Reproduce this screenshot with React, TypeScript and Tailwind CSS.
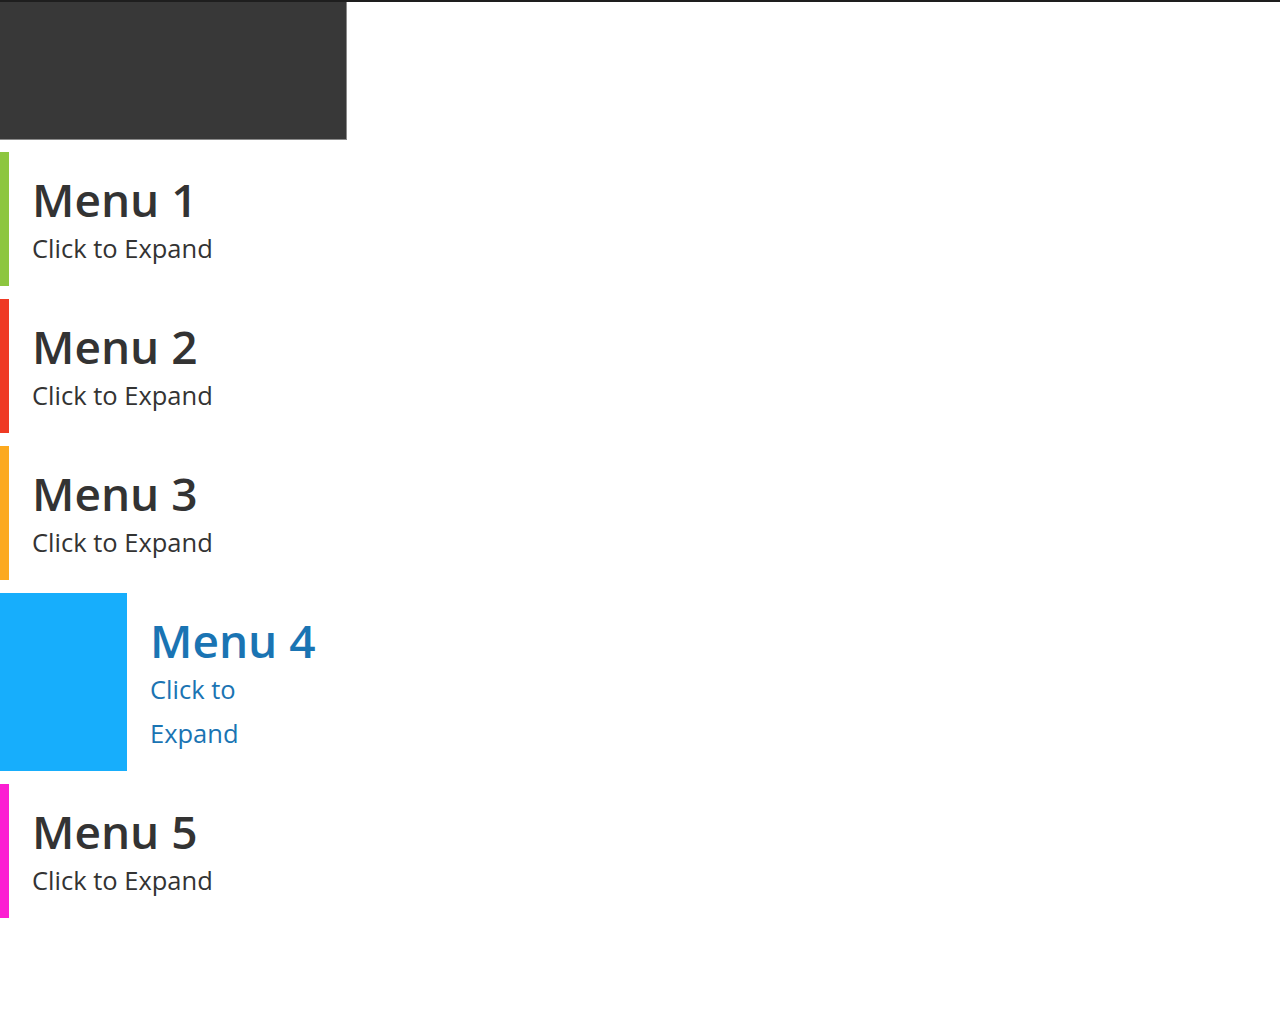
const items = [
  { label: "Menu 1", bar: "bg-[#8dc63f]", active: false },
  { label: "Menu 2", bar: "bg-[#ef3a24]", active: false },
  { label: "Menu 3", bar: "bg-[#fca91f]", active: false },
  { label: "Menu 4", bar: "bg-[#17aefc]", active: true },
  { label: "Menu 5", bar: "bg-[#fc1ed2]", active: false },
];

function MenuItem({ label, bar, active }: { label: string; bar: string; active: boolean }) {
  return (
    <li className="flex w-[347px] cursor-pointer">
      <div className={`${bar} shrink-0 ${active ? "w-[127px]" : "w-[9px]"}`} />
      <div
        className={`min-w-0 flex-1 pt-[20px] pb-[16px] pr-[30px] pl-[23px] ${
          active ? "text-[#1a74b3]" : "text-[#333333]"
        }`}
      >
        <h2 className="text-[46px] leading-[54px] font-semibold">{label}</h2>
        <p className="text-[25.5px] leading-[44px]">Click to Expand</p>
      </div>
    </li>
  );
}

export default function App() {
  return (
    <div
      className="min-h-screen border-t-2 border-[#1e1e1e] bg-white"
      style={{ fontFamily: '"Open Sans", "Noto Sans", sans-serif' }}
    >
      <div className="h-[138px] w-[347px] border-r border-b border-[#8a8a8a] bg-[#383838]" />
      <ul className="mt-[12px] flex flex-col gap-[13px]">
        {items.map((item) => (
          <MenuItem key={item.label} {...item} />
        ))}
      </ul>
    </div>
  );
}
